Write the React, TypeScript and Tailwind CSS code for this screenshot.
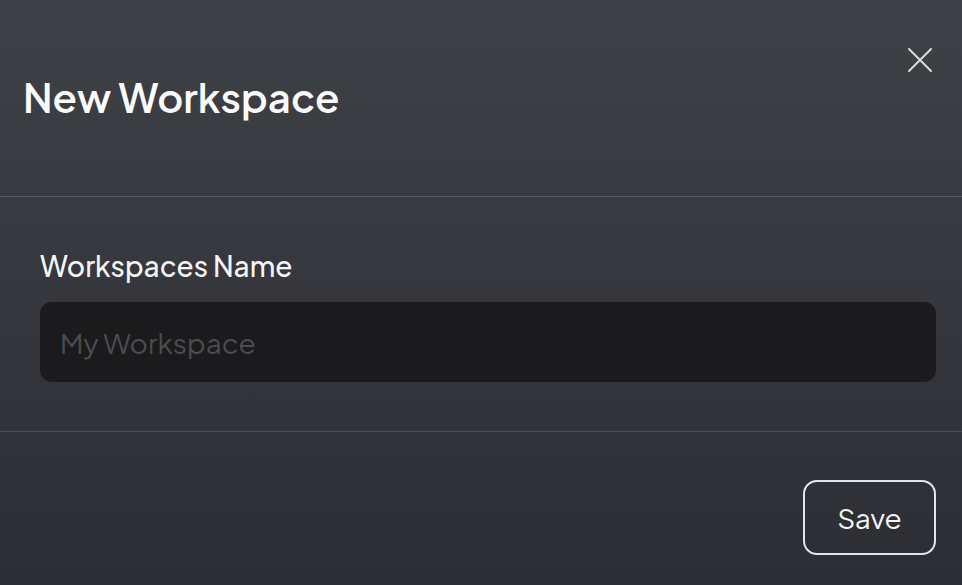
import React from "react";

export default function App() {
  const font = { fontFamily: "'Plus Jakarta Sans', Inter, 'Noto Sans', sans-serif" };
  return (
    <div
      className="w-full h-[585px] flex flex-col bg-gradient-to-b from-[#3e4146] to-[#2d2e33] text-white overflow-hidden"
      style={font}
    >
      <div className="relative h-[196px] shrink-0 flex items-center pl-[23px] pb-[2px]">
        <h1 className="text-[40px] leading-[48px] font-semibold tracking-[0px] text-[#fafafa]">
          New Workspace
        </h1>
        <button className="absolute right-[28px] top-[46px] w-[28px] h-[28px] flex items-center justify-center text-[#d8dadd]">
          <svg width="26" height="26" viewBox="0 0 26 26" fill="none" stroke="currentColor" strokeWidth="2" strokeLinecap="round">
            <path d="M2 2 L24 24 M24 2 L2 24" />
          </svg>
        </button>
      </div>
      <div className="h-[1px] bg-[#53565b] shrink-0" />
      <div className="h-[234px] shrink-0 flex flex-col pl-[40px] pr-[26px] pt-[51px]">
        <label className="text-[28px] leading-[36px] font-medium text-[#f5f5f5]">Workspaces Name</label>
        <input
          className="mt-[18px] h-[80px] w-full rounded-[12px] bg-[#1b1b1d] px-[20px] text-[28px] text-white placeholder:text-[#4b4c50] outline-none"
          placeholder="My Workspace"
          style={font}
        />
      </div>
      <div className="h-[1px] bg-[#4a4c51] shrink-0" />
      <div className="flex-1 flex justify-end items-start pr-[26px] pt-[48px]">
        <button className="w-[133px] h-[75px] rounded-[14px] border-2 border-[#e2e6ec] text-[28px] text-[#f5f5f5]">
          Save
        </button>
      </div>
    </div>
  );
}
